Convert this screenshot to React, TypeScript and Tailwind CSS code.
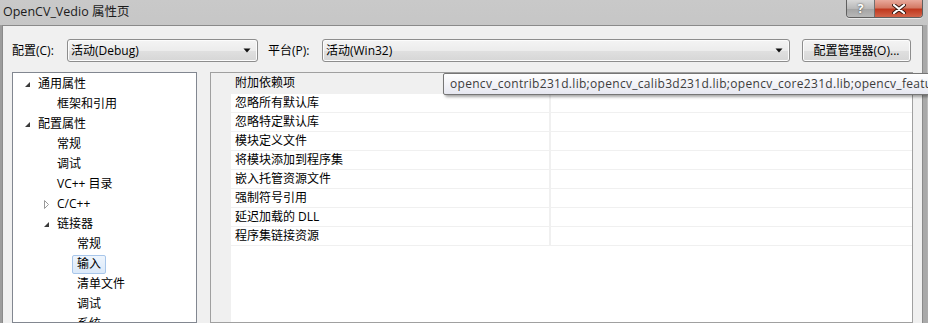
import React from "react";

type TreeItem = {
  text: string;
  level: number;
  icon?: "open" | "closed";
  selected?: boolean;
};

const treeItems: TreeItem[] = [
  { text: "通用属性", level: 0, icon: "open" },
  { text: "框架和引用", level: 1 },
  { text: "配置属性", level: 0, icon: "open" },
  { text: "常规", level: 1 },
  { text: "调试", level: 1 },
  { text: "VC++ 目录", level: 1 },
  { text: "C/C++", level: 1, icon: "closed" },
  { text: "链接器", level: 1, icon: "open" },
  { text: "常规", level: 2 },
  { text: "输入", level: 2, selected: true },
  { text: "清单文件", level: 2 },
  { text: "调试", level: 2 },
  { text: "系统", level: 2 },
];

const gridRows = [
  "附加依赖项",
  "忽略所有默认库",
  "忽略特定默认库",
  "模块定义文件",
  "将模块添加到程序集",
  "嵌入托管资源文件",
  "强制符号引用",
  "延迟加载的 DLL",
  "程序集链接资源",
];

const levelPad = ["pl-[11px]", "pl-[30px]", "pl-[50px]"];

function Expander({ kind }: { kind?: "open" | "closed" }) {
  if (kind === "open") {
    return (
      <svg width="7" height="7" viewBox="0 0 7 7">
        <path d="M6 1 L6 6 L1 6 Z" fill="#3b3b3b" />
      </svg>
    );
  }
  if (kind === "closed") {
    return (
      <svg width="7" height="9" viewBox="0 0 7 9">
        <path d="M1.5 0.5 L5.5 4.5 L1.5 8.5 Z" fill="none" stroke="#9a9a9a" />
      </svg>
    );
  }
  return null;
}

function Combo({ text, width }: { text: string; width: string }) {
  return (
    <div
      className={`${width} h-[23px] flex items-center rounded-[3px] border border-[#8d8d8d] bg-[linear-gradient(#f4f4f4,#ececec_50%,#e0e0e0_51%,#d6d6d6)] pl-[3px] pr-[6px] shadow-[inset_0_0_0_1px_#fcfcfc]`}
    >
      <span className="flex-1 text-[12px] text-black">{text}</span>
      <svg width="8" height="5" viewBox="0 0 8 5">
        <path d="M0.5 0.5 L7.5 0.5 L4 4.5 Z" fill="#111" />
      </svg>
    </div>
  );
}

export default function App() {
  return (
    <div className="relative w-[928px] h-[323px] overflow-hidden flex flex-col bg-[linear-gradient(#c9c9c9,#b4b4b4_60%,#aaaaaa)] font-['Open_Sans','Noto_Sans_CJK_SC',sans-serif]">
      {/* title bar */}
      <div className="h-[25px] flex items-start shrink-0">
        <span className="pl-[3px] pt-[2px] text-[12.5px] leading-[20px] text-[#1b1b1b]">
          OpenCV_Vedio 属性页
        </span>
        <div className="ml-auto mr-[5px] flex h-[18px] rounded-b-[4px] border border-t-0 border-[#5f5f5f] overflow-hidden shadow-[0_1px_0_#e8e8e8]">
          <div className="w-[28px] flex items-center justify-center border-r border-[#707070] bg-[linear-gradient(#d8d8d8,#b9b9b9_50%,#a3a3a3_51%,#b8b8b8)] text-[12px] font-bold leading-none text-white [text-shadow:0_0_2px_#333]">
            ?
          </div>
          <div className="w-[47px] flex items-center justify-center bg-[linear-gradient(#e9a99b,#d47b66_45%,#c0391f_55%,#d2644a)]">
            <svg width="14" height="10" viewBox="0 0 14 10">
              <path
                d="M2 1 L12 9 M12 1 L2 9"
                stroke="#3a1a12"
                strokeWidth="4"
                strokeLinecap="round"
              />
              <path
                d="M2 1 L12 9 M12 1 L2 9"
                stroke="#ffffff"
                strokeWidth="2.2"
                strokeLinecap="round"
              />
            </svg>
          </div>
        </div>
      </div>

      {/* window body */}
      <div className="flex-1 flex min-h-0">
        <div className="w-[2px] bg-[#9c9c9c]" />
        <div className="w-[921px] bg-[#f0f0f0] border-t border-l border-r border-[#8a8a8a] pl-[9px] pt-[13px] flex flex-col text-[12px] text-black">
          {/* config row */}
          <div className="flex items-center h-[23px]">
            <span className="w-[55px]">配置(C):</span>
            <Combo text="活动(Debug)" width="w-[191px]" />
            <span className="ml-[10px] w-[54px]">平台(P):</span>
            <Combo text="活动(Win32)" width="w-[468px]" />
            <div className="ml-[12px] w-[109px] h-[23px] flex items-center justify-center rounded-[3px] border border-[#8d8d8d] bg-[linear-gradient(#f4f4f4,#ececec_50%,#e0e0e0_51%,#d6d6d6)] shadow-[inset_0_0_0_1px_#fcfcfc]">
              配置管理器(O)...
            </div>
          </div>

          {/* panels */}
          <div className="flex mt-[10px] flex-1 min-h-0">
            {/* tree */}
            <div className="w-[185px] bg-white border border-[#828790] pt-[1px] overflow-hidden">
              {treeItems.map((item, i) => (
                <div
                  key={i}
                  className={`h-[20px] flex items-center ${levelPad[item.level]}`}
                >
                  <div className="w-[14px] flex items-center">
                    <Expander kind={item.icon} />
                  </div>
                  <span
                    className={`-ml-[5px] h-[19px] flex items-center px-[4px] border rounded-[2px] whitespace-nowrap ${
                      item.selected
                        ? "border-[#a8c6ea] bg-[linear-gradient(#eef5fd,#dbe9f9)]"
                        : "border-transparent"
                    }`}
                  >
                    {item.text}
                  </span>
                </div>
              ))}
            </div>

            {/* property grid */}
            <div className="ml-[13px] w-[703px] bg-white border border-[#a0a0a0] flex">
              <div className="w-[20px] bg-[#f0f0f0]" />
              <div className="flex-1 flex flex-col">
                {gridRows.map((label, i) => (
                  <div
                    key={i}
                    className={`flex border-b border-[#f0f0f0] ${
                      i === 0 ? "h-[21px] bg-[#f0f0f0]" : "h-[19px]"
                    }`}
                  >
                    <div className="w-[320px] border-r-2 border-[#f0f0f0] pl-[4px] flex items-center whitespace-nowrap">
                      {label}
                    </div>
                    <div className="flex-1" />
                  </div>
                ))}
              </div>
            </div>
          </div>
        </div>
        <div className="w-[4px] bg-[#a9a9a9]" />
      </div>

      {/* tooltip */}
      <div className="absolute left-[443px] top-[73px] w-[520px] h-[22px] rounded-[2px] border border-[#767676] bg-[linear-gradient(#ffffff,#e6e7f0)] shadow-[2px_2px_3px_rgba(0,0,0,0.35)] pl-[6px] flex items-center text-[12px] tracking-[0.3px] text-[#3c3c3c] whitespace-nowrap">
        opencv_contrib231d.lib;opencv_calib3d231d.lib;opencv_core231d.lib;opencv_features2d231d.lib
      </div>
    </div>
  );
}
